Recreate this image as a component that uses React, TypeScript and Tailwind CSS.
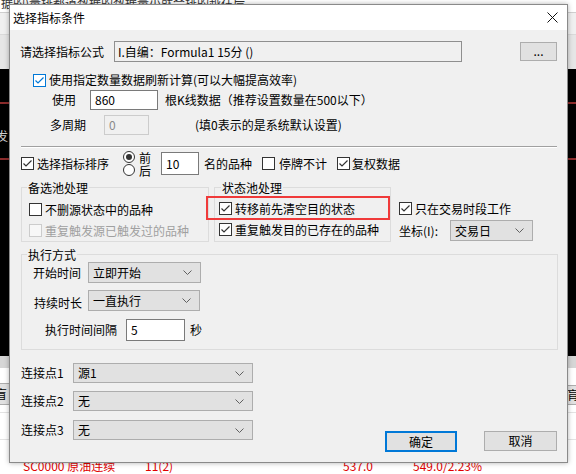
import React from 'react';

const Check: React.FC<{ checked?: boolean; blue?: boolean; disabled?: boolean }> = ({ checked, blue, disabled }) => (
  <span
    className={`flex h-[13px] w-[13px] shrink-0 items-center justify-center border ${
      disabled ? 'border-[#cccccc] bg-[#f7f7f7]' : blue ? 'border-[#0078d7] bg-white' : 'border-[#333333] bg-white'
    }`}
  >
    {checked && (
      <svg width="11" height="11" viewBox="0 0 11 11">
        <path d="M1.5 5.5 L4 8 L9.5 2.5" fill="none" stroke={blue ? '#0078d7' : '#333333'} strokeWidth="1.2" />
      </svg>
    )}
  </span>
);

const Radio: React.FC<{ checked?: boolean }> = ({ checked }) => (
  <span className="flex h-[12px] w-[12px] shrink-0 items-center justify-center rounded-full border border-[#333333] bg-white">
    {checked && <span className="h-[6px] w-[6px] rounded-full bg-[#333333]" />}
  </span>
);

const Chevron = () => (
  <svg width="9" height="5" viewBox="0 0 9 5" className="shrink-0">
    <path d="M0.5 0.5 L4.5 4.5 L8.5 0.5" fill="none" stroke="#606060" strokeWidth="1" />
  </svg>
);

const Combo: React.FC<{ value: string; className: string }> = ({ value, className }) => (
  <div className={`flex items-center justify-between border border-[#adadad] bg-[#e1e1e1] pl-[4px] pr-[8px] ${className}`}>
    <span>{value}</span>
    <Chevron />
  </div>
);

const CheckRow: React.FC<{ label: string; checked?: boolean; disabled?: boolean }> = ({ label, checked, disabled }) => (
  <div className="flex h-[13px] items-center">
    <Check checked={checked} disabled={disabled} />
    <span className={`ml-[3px] whitespace-nowrap ${disabled ? 'text-[#a0a0a0]' : ''}`}>{label}</span>
  </div>
);

export default function App() {
  return (
    <div className="relative h-[474px] w-[576px] overflow-hidden bg-white font-['Noto_Sans_CJK_SC','Noto_Sans',sans-serif] text-[12px] leading-[16px] text-black">
      {/* app behind the dialog */}
      <div className="flex h-full flex-col">
        <div className="h-[12px] overflow-hidden bg-white">
          <div className="-mt-[5px] whitespace-nowrap pl-[1px] text-[#333333]">据的)量排都道数据的数据量小就会排的越往后</div>
        </div>
        <div className="h-[23px] border-t border-[#cfcfcf] bg-[#f0f0f0]" />
        <div className="h-[35px] border-t border-[#dadada] bg-[#e6e6e6]" />
        <div className="flex h-[292px] flex-col bg-black">
          <div className="mt-[33px] h-[2px] bg-[#8b2b2b]" />
          <div className="mt-[24px] text-[#d0d0d0]">
            <span className="-ml-[4px]">发</span>
          </div>
          <div className="mt-[14px] h-[2px] bg-[#8b2b2b]" />
        </div>
        <div className="h-[13px] bg-[#d6d6d6]" />
        <div className="flex h-[45px] items-start justify-between bg-white">
          <div className="-ml-[14px] mt-[15px] flex h-[22px] w-[24px] items-center justify-end border border-[#adadad] bg-[#e1e1e1] pr-[2px]">盲</div>
          <div className="-mr-[14px] mt-[17px] flex h-[20px] w-[24px] items-center border border-[#adadad] bg-[#e1e1e1]">肓</div>
        </div>
        <div className="h-[27px] border-t border-[#e3e3e3] bg-white" />
        <div className="flex-1 border-t border-[#e3e3e3] bg-white pt-[18px] text-[#e00000]">
          <div className="flex whitespace-nowrap">
            <span className="ml-[23px] w-[122px]">SC0000 原油连续</span>
            <span className="w-[198px]">11(2)</span>
            <span className="w-[70px]">537.0</span>
            <span>549.0/2.23%</span>
          </div>
        </div>
      </div>

      {/* dialog window */}
      <div className="absolute left-[9px] top-[4px] flex h-[459px] w-[559px] flex-col border border-[#8a8a8a] bg-[#f0f0f0] shadow-[0_0_5px_rgba(0,0,0,0.3)]">
        <div className="flex h-[25px] shrink-0 items-center bg-white pl-[3px]">
          <span>选择指标条件</span>
          <svg width="11" height="11" viewBox="0 0 11 11" className="ml-auto mr-[9px]">
            <path d="M0.5 0.5 L10.5 10.5 M10.5 0.5 L0.5 10.5" stroke="#111111" strokeWidth="1" />
          </svg>
        </div>

        <div className="flex flex-col pl-[11px]">
          {/* formula */}
          <div className="mt-[11px] flex h-[21px] items-center">
            <span className="-ml-[1px] w-[94px]">请选择指标公式</span>
            <div className="flex h-[21px] w-[348px] items-center border border-[#8f8f8f] bg-[#f0f0f0] pl-[3px]">I.自编：Formula1 15分 ()</div>
            <div className="ml-[58px] flex h-[19px] w-[37px] items-center justify-center border border-[#adadad] bg-[#e1e1e1] pb-[2px]">...</div>
          </div>

          <div className="ml-[12px] mt-[11px] flex h-[14px] items-center">
            <Check checked blue />
            <span className="ml-[3px]">使用指定数量数据刷新计算(可以大幅提高效率)</span>
          </div>

          <div className="ml-[31px] mt-[3px] flex h-[20px] items-center">
            <span className="w-[38px]">使用</span>
            <div className="flex h-[20px] w-[68px] items-center border border-[#7a7a7a] bg-white pl-[4px]">860</div>
            <span className="ml-[7px]">根K线数据（推荐设置数量在500以下）</span>
          </div>

          <div className="ml-[29px] mt-[5px] flex h-[20px] items-center">
            <span className="w-[54px]">多周期</span>
            <div className="flex h-[20px] w-[45px] items-center border border-[#cccccc] bg-[#f0f0f0] pl-[4px] text-[#8a8a8a]">0</div>
            <span className="ml-[46px]">(填0表示的是系统默认设置)</span>
          </div>

          <div className="mt-[11px] h-0 w-[536px] border-b border-t border-b-white border-t-[#a0a0a0]" />

          {/* sort row */}
          <div className="mt-[2px] flex h-[27px] items-center">
            <Check checked />
            <span className="ml-[3px]">选择指标排序</span>
            <div className="ml-[14px] flex flex-col leading-[13px]">
              <div className="flex h-[13px] items-center">
                <Radio checked />
                <span className="ml-[4px]">前</span>
              </div>
              <div className="flex h-[13px] items-center">
                <Radio />
                <span className="ml-[4px]">后</span>
              </div>
            </div>
            <div className="ml-[10px] flex h-[23px] w-[38px] items-center border border-[#7a7a7a] bg-white pl-[4px]">10</div>
            <span className="ml-[5px]">名的品种</span>
            <span className="ml-[10px]">
              <Check />
            </span>
            <span className="ml-[4px]">停牌不计</span>
            <span className="ml-[10px]">
              <Check checked />
            </span>
            <span className="ml-[2px]">复权数据</span>
          </div>

          {/* pool groups */}
          <div className="mt-[10px] flex h-[55px] items-start">
            <div className="relative h-[55px] w-[188px] border border-[#dcdcdc] pl-[7px] pt-[15px]">
              <span className="absolute -top-[8px] left-[5px] bg-[#f0f0f0] px-[1px]">备选池处理</span>
              <CheckRow label="不删源状态中的品种" />
              <div className="mt-[8px]">
                <CheckRow label="重复触发源已触发过的品种" disabled />
              </div>
            </div>
            <div className="relative ml-[5px] h-[55px] w-[177px] border border-[#dcdcdc] pl-[4px] pt-[14px]">
              <span className="absolute -top-[8px] left-[6px] bg-[#f0f0f0] px-[1px]">状态池处理</span>
              <CheckRow label="转移前先清空目的状态" checked />
              <div className="mt-[8px]">
                <CheckRow label="重复触发目的已存在的品种" checked />
              </div>
              <div className="absolute -left-[9px] top-[8px] h-[24px] w-[184px] border-2 border-[#f03a3a]" />
            </div>
            <div className="ml-[8px] flex flex-col pt-[15px]">
              <CheckRow label="只在交易时段工作" checked />
              <div className="mt-[5px] flex h-[21px] items-center">
                <span className="w-[51px]">坐标(I):</span>
                <Combo value="交易日" className="h-[21px] w-[83px]" />
              </div>
            </div>
          </div>

          {/* execution */}
          <div className="relative mt-[12px] h-[96px] w-[537px] border border-[#dcdcdc] pl-[11px] pt-[7px]">
            <span className="absolute -top-[8px] left-[5px] bg-[#f0f0f0] px-[1px]">执行方式</span>
            <div className="flex h-[21px] items-center">
              <span className="w-[55px]">开始时间</span>
              <Combo value="立即开始" className="h-[21px] w-[113px]" />
            </div>
            <div className="mt-[7px] flex h-[21px] items-center">
              <span className="w-[55px] pl-[1px] pt-[4px]">持续时长</span>
              <Combo value="一直执行" className="h-[21px] w-[112px]" />
            </div>
            <div className="mt-[8px] flex h-[22px] items-center">
              <span className="ml-[12px] w-[81px]">执行时间间隔</span>
              <div className="flex h-[22px] w-[59px] items-center border border-[#7a7a7a] bg-white pl-[4px]">5</div>
              <span className="ml-[5px]">秒</span>
            </div>
          </div>

          {/* connect points + buttons */}
          <div className="mt-[13px] flex items-start">
            <div className="flex flex-col">
              {[
                ['1', '源1', ''],
                ['2', '无', 'mt-[8px]'],
                ['3', '无', 'mt-[9px]'],
              ].map(([n, v, m]) => (
                <div key={n} className={`flex h-[20px] items-center ${m}`}>
                  <span className="w-[52px]">连接点{n}</span>
                  <Combo value={v} className="h-[20px] w-[180px]" />
                </div>
              ))}
            </div>
            <div className="ml-[132px] mt-[68px] flex h-[21px] w-[72px] items-center justify-center border-2 border-[#0078d7] bg-[#e1e1e1]">确定</div>
            <div className="ml-[27px] mt-[68px] flex h-[20px] w-[73px] items-center justify-center border border-[#adadad] bg-[#e1e1e1]">取消</div>
          </div>
        </div>
      </div>
    </div>
  );
}
